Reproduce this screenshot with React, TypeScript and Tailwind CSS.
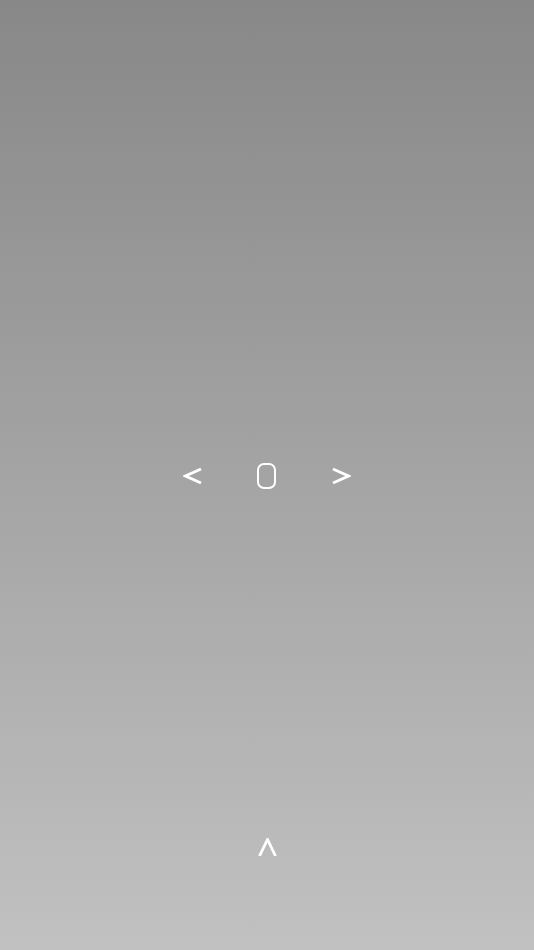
import React from 'react';

function Chevron({ dir }: { dir: 'left' | 'right' | 'up' }) {
  const d =
    dir === 'left'
      ? 'M18 2 L2.5 9 L18 16'
      : dir === 'right'
      ? 'M1 2 L16.5 9 L1 16'
      : 'M1.5 18 L9.5 1.5 L17.5 18';
  return (
    <svg width="19" height="18" viewBox="0 0 19 18" fill="none" className="block">
      <path d={d} stroke="white" strokeWidth="2.8" strokeLinejoin="miter" strokeLinecap="butt" />
    </svg>
  );
}

export default function App() {
  return (
    <div className="w-full h-[950px] bg-gradient-to-b from-[#888888] to-[#c1c1c1] flex flex-col items-center overflow-hidden">
      <div className="mt-[463px] flex items-center h-[26px]">
        <div className="ml-[-1px]">
          <Chevron dir="left" />
        </div>
        <div className="ml-[55px] w-[19px] h-[26px] rounded-[7px] border-2 border-white" />
        <div className="ml-[56px]">
          <Chevron dir="right" />
        </div>
      </div>
      <div className="mt-[349px]">
        <Chevron dir="up" />
      </div>
    </div>
  );
}
